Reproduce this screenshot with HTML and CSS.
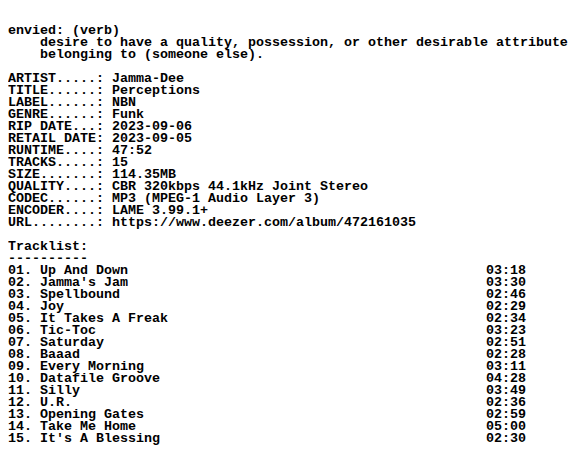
FILE: index.html
```html
<!DOCTYPE html>
<html>
<head>
<meta charset="utf-8">
<link rel="stylesheet" href="styles.css">
</head>
<body>
<div class="nfo">
<div class="block">envied: (verb)
    desire to have a quality, possession, or other desirable attribute
    belonging to (someone else).

ARTIST.....: Jamma-Dee
TITLE......: Perceptions
LABEL......: NBN
GENRE......: Funk
RIP DATE...: 2023-09-06
RETAIL DATE: 2023-09-05
RUNTIME....: 47:52
TRACKS.....: 15
SIZE.......: 114.35MB
QUALITY....: CBR 320kbps 44.1kHz Joint Stereo
CODEC......: MP3 (MPEG-1 Audio Layer 3)
ENCODER....: LAME 3.99.1+
URL........: https://www.deezer.com/album/472161035

Tracklist:
----------</div>
<div class="tracks">
<div class="track"><span class="title">01. Up And Down</span><span>03:18</span></div>
<div class="track"><span class="title">02. Jamma's Jam</span><span>03:30</span></div>
<div class="track"><span class="title">03. Spellbound</span><span>02:46</span></div>
<div class="track"><span class="title">04. Joy</span><span>02:29</span></div>
<div class="track"><span class="title">05. It Takes A Freak</span><span>02:34</span></div>
<div class="track"><span class="title">06. Tic-Toc</span><span>03:23</span></div>
<div class="track"><span class="title">07. Saturday</span><span>02:51</span></div>
<div class="track"><span class="title">08. Baaad</span><span>02:28</span></div>
<div class="track"><span class="title">09. Every Morning</span><span>03:11</span></div>
<div class="track"><span class="title">10. Datafile Groove</span><span>04:28</span></div>
<div class="track"><span class="title">11. Silly</span><span>03:49</span></div>
<div class="track"><span class="title">12. U.R.</span><span>02:36</span></div>
<div class="track"><span class="title">13. Opening Gates</span><span>02:59</span></div>
<div class="track"><span class="title">14. Take Me Home</span><span>05:00</span></div>
<div class="track"><span class="title">15. It's A Blessing</span><span>02:30</span></div>
</div>
</div>
</body>
</html>
```
FILE: styles.css
```css
html, body {
  overflow: hidden;
}
body {
  margin: 25px 0 0 8px;
  background: #fff;
  color: #000;
  font-family: "Liberation Mono", "DejaVu Sans Mono", monospace;
  font-weight: bold;
  font-size: 13.333px;
  line-height: 12px;
}
.block {
  white-space: pre;
}
.track {
  display: flex;
  white-space: pre;
}
.title {
  width: 59.75ch;
  flex: none;
}
```
